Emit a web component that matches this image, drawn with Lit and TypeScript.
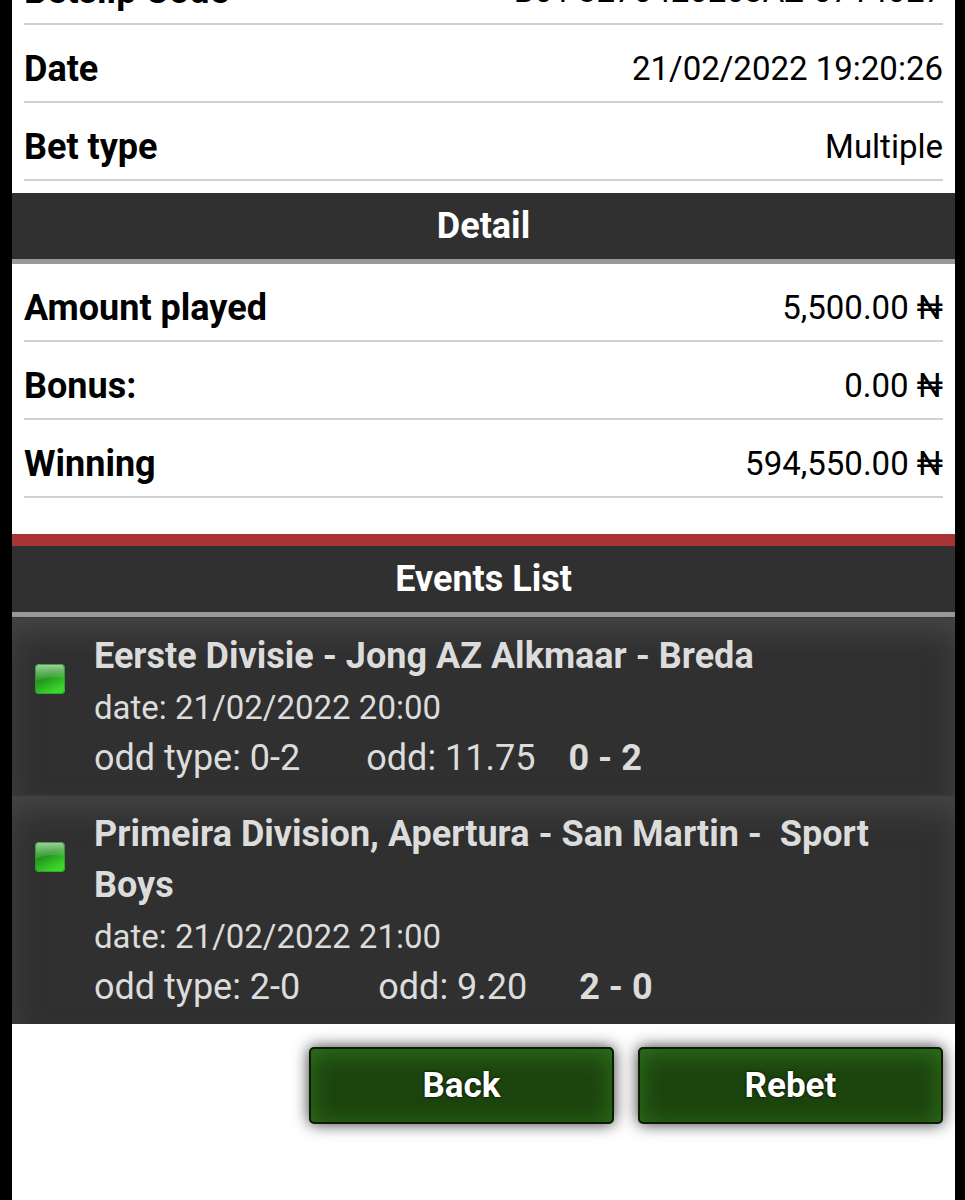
import { LitElement, html, css } from "lit";
import { customElement, property } from "lit/decorators.js";
import { classMap } from "lit/directives/class-map.js";

interface Row {
  label: string;
  value: string;
}

interface BetEvent {
  title: string;
  date: string;
  oddType: string;
  odd: string;
  score: string;
}

const SLIP: Row[] = [
  { label: "Betslip Code", value: "B0T-327042020JAZ-0714027" },
  { label: "Date", value: "21/02/2022 19:20:26" },
  { label: "Bet type", value: "Multiple" },
];

const DETAIL: Row[] = [
  { label: "Amount played", value: "5,500.00 ₦" },
  { label: "Bonus:", value: "0.00 ₦" },
  { label: "Winning", value: "594,550.00 ₦" },
];

const EVENTS: BetEvent[] = [
  {
    title: "Eerste Divisie - Jong AZ Alkmaar - Breda",
    date: "21/02/2022 20:00",
    oddType: "0-2",
    odd: "11.75",
    score: "0 - 2",
  },
  {
    title: "Primeira Division, Apertura - San Martin - \u00a0Sport Boys",
    date: "21/02/2022 21:00",
    oddType: "2-0",
    odd: "9.20",
    score: "2 - 0",
  },
];

@customElement("slip-rows")
class SlipRows extends LitElement {
  @property({ attribute: false }) rows: Row[] = [];

  static styles = css`
    :host {
      display: block;
    }
    .rows {
      margin: 0;
      padding: 0 12px;
    }
    .row {
      display: flex;
      justify-content: space-between;
      align-items: center;
      padding: 19px 0 7px;
      border-bottom: 2px solid #d0d0d0;
      line-height: 50px;
    }
    .label {
      font-size: 36px;
      font-weight: 700;
    }
    .value {
      margin: 0;
      font-size: 33px;
    }
  `;

  render() {
    return html`<dl class="rows">
      ${this.rows.map(
        (r) => html`<div class="row">
          <dt class="label">${r.label}</dt>
          <dd class="value">${r.value}</dd>
        </div>`
      )}
    </dl>`;
  }
}

@customElement("event-item")
class EventItem extends LitElement {
  @property({ attribute: false }) event!: BetEvent;

  static styles = css`
    :host {
      display: block;
    }
    .item {
      display: grid;
      grid-template-columns: 30px 1fr;
      column-gap: 29px;
      padding: 13px 23px 11px;
      border-top: 1px solid #383838;
      background: #303030;
      box-shadow: inset 0 16px 30px -3px #464646;
      color: #dcdcdc;
      line-height: 51px;
      font-size: 36px;
    }
    .status {
      display: block;
      width: 32px;
      height: 32px;
      margin-top: 33px;
    }
    .title {
      margin: 0;
      font-size: 36px;
      font-weight: 700;
    }
    .date {
      margin: 0;
      font-size: 33px;
    }
    .odds {
      display: flex;
      margin: 0;
      gap: 33px;
    }
    .type {
      padding-right: 33px;
    }
    .short {
      gap: 52px;
    }
    .short .type {
      padding-right: 26px;
    }
    .score {
      font-weight: 700;
    }
  `;

  render() {
    const e = this.event;
    return html`<article class="item">
      <svg class="status" viewBox="0 0 32 32" role="img" aria-label="Won">
        <defs>
          <linearGradient id="base" x1="0" y1="0" x2="0.5" y2="1">
            <stop offset="0" stop-color="#3fa83f" />
            <stop offset="0.5" stop-color="#229420" />
            <stop offset="1" stop-color="#3cd82c" />
          </linearGradient>
          <linearGradient id="gloss" x1="0" y1="0" x2="0" y2="1">
            <stop offset="0" stop-color="#a8d4a8" stop-opacity="0.95" />
            <stop offset="1" stop-color="#5cb45a" stop-opacity="0.2" />
          </linearGradient>
        </defs>
        <rect x="0" y="0" width="30" height="30" rx="4" fill="url(#base)" />
        <path d="M0.500 4Q0.500 0.500 4 0.500H26Q29.500 0.500 29.500 4V14Q15 11 0.500 17Z" fill="url(#gloss)" />
        <rect x="0.5" y="0.5" width="29" height="29" rx="4" fill="none" stroke="#2f8a33" stroke-opacity="0.6" />
      </svg>
      <div>
        <h3 class="title">${e.title}</h3>
        <p class="date">date: ${e.date}</p>
        <p class=${classMap({ odds: true, short: e.odd.length < 5 })}>
          <span class="type">odd type: ${e.oddType}</span>
          <span>odd: ${e.odd}</span>
          <span class="score">${e.score}</span>
        </p>
      </div>
    </article>`;
  }
}

@customElement("app-root")
class AppRoot extends LitElement {
  static styles = css`
    :host {
      display: block;
      box-sizing: border-box;
      min-height: 100vh;
      overflow: hidden;
      border: solid #000;
      border-width: 0 10px 0 12px;
      background: #fff;
      color: #000;
      font-family: Roboto, "Liberation Sans", sans-serif;
    }
    /* The page is scrolled part of the way into the first row. */
    .slip {
      margin-top: -53px;
      padding-bottom: 12px;
    }
    .detail {
      padding-bottom: 36px;
    }
    .heading {
      margin: 0;
      padding: 8px 12px;
      background: #303030;
      border-bottom: 5px solid #999;
      color: #fff;
      font-size: 36px;
      font-weight: 700;
      line-height: 50px;
      text-align: center;
    }
    .events {
      border-top: 12px solid #a83434;
    }
    .actions {
      display: flex;
      justify-content: flex-end;
      gap: 24px;
      padding: 23px 12px;
    }
    .button {
      flex: 0 0 305px;
      min-width: 0;
      padding: 12px;
      border: 2px solid #0c1c06;
      border-radius: 5px;
      background: #1c440e;
      box-shadow: 0 0 16px rgba(0, 0, 0, 0.8), inset 0 4px 24px #2f741c;
      color: #fff;
      font-family: inherit;
      font-size: 35px;
      font-weight: 700;
      line-height: 49px;
      text-shadow: 0 0 3px #000;
      cursor: pointer;
    }
  `;

  render() {
    return html`<main>
      <slip-rows class="slip" .rows=${SLIP}></slip-rows>
      <section>
        <h2 class="heading">Detail</h2>
        <slip-rows class="detail" .rows=${DETAIL}></slip-rows>
      </section>
      <section class="events">
        <h2 class="heading">Events List</h2>
        ${EVENTS.map((e) => html`<event-item .event=${e}></event-item>`)}
      </section>
      <div class="actions">
        <button class="button" type="button">Back</button>
        <button class="button" type="button">Rebet</button>
      </div>
    </main>`;
  }
}
